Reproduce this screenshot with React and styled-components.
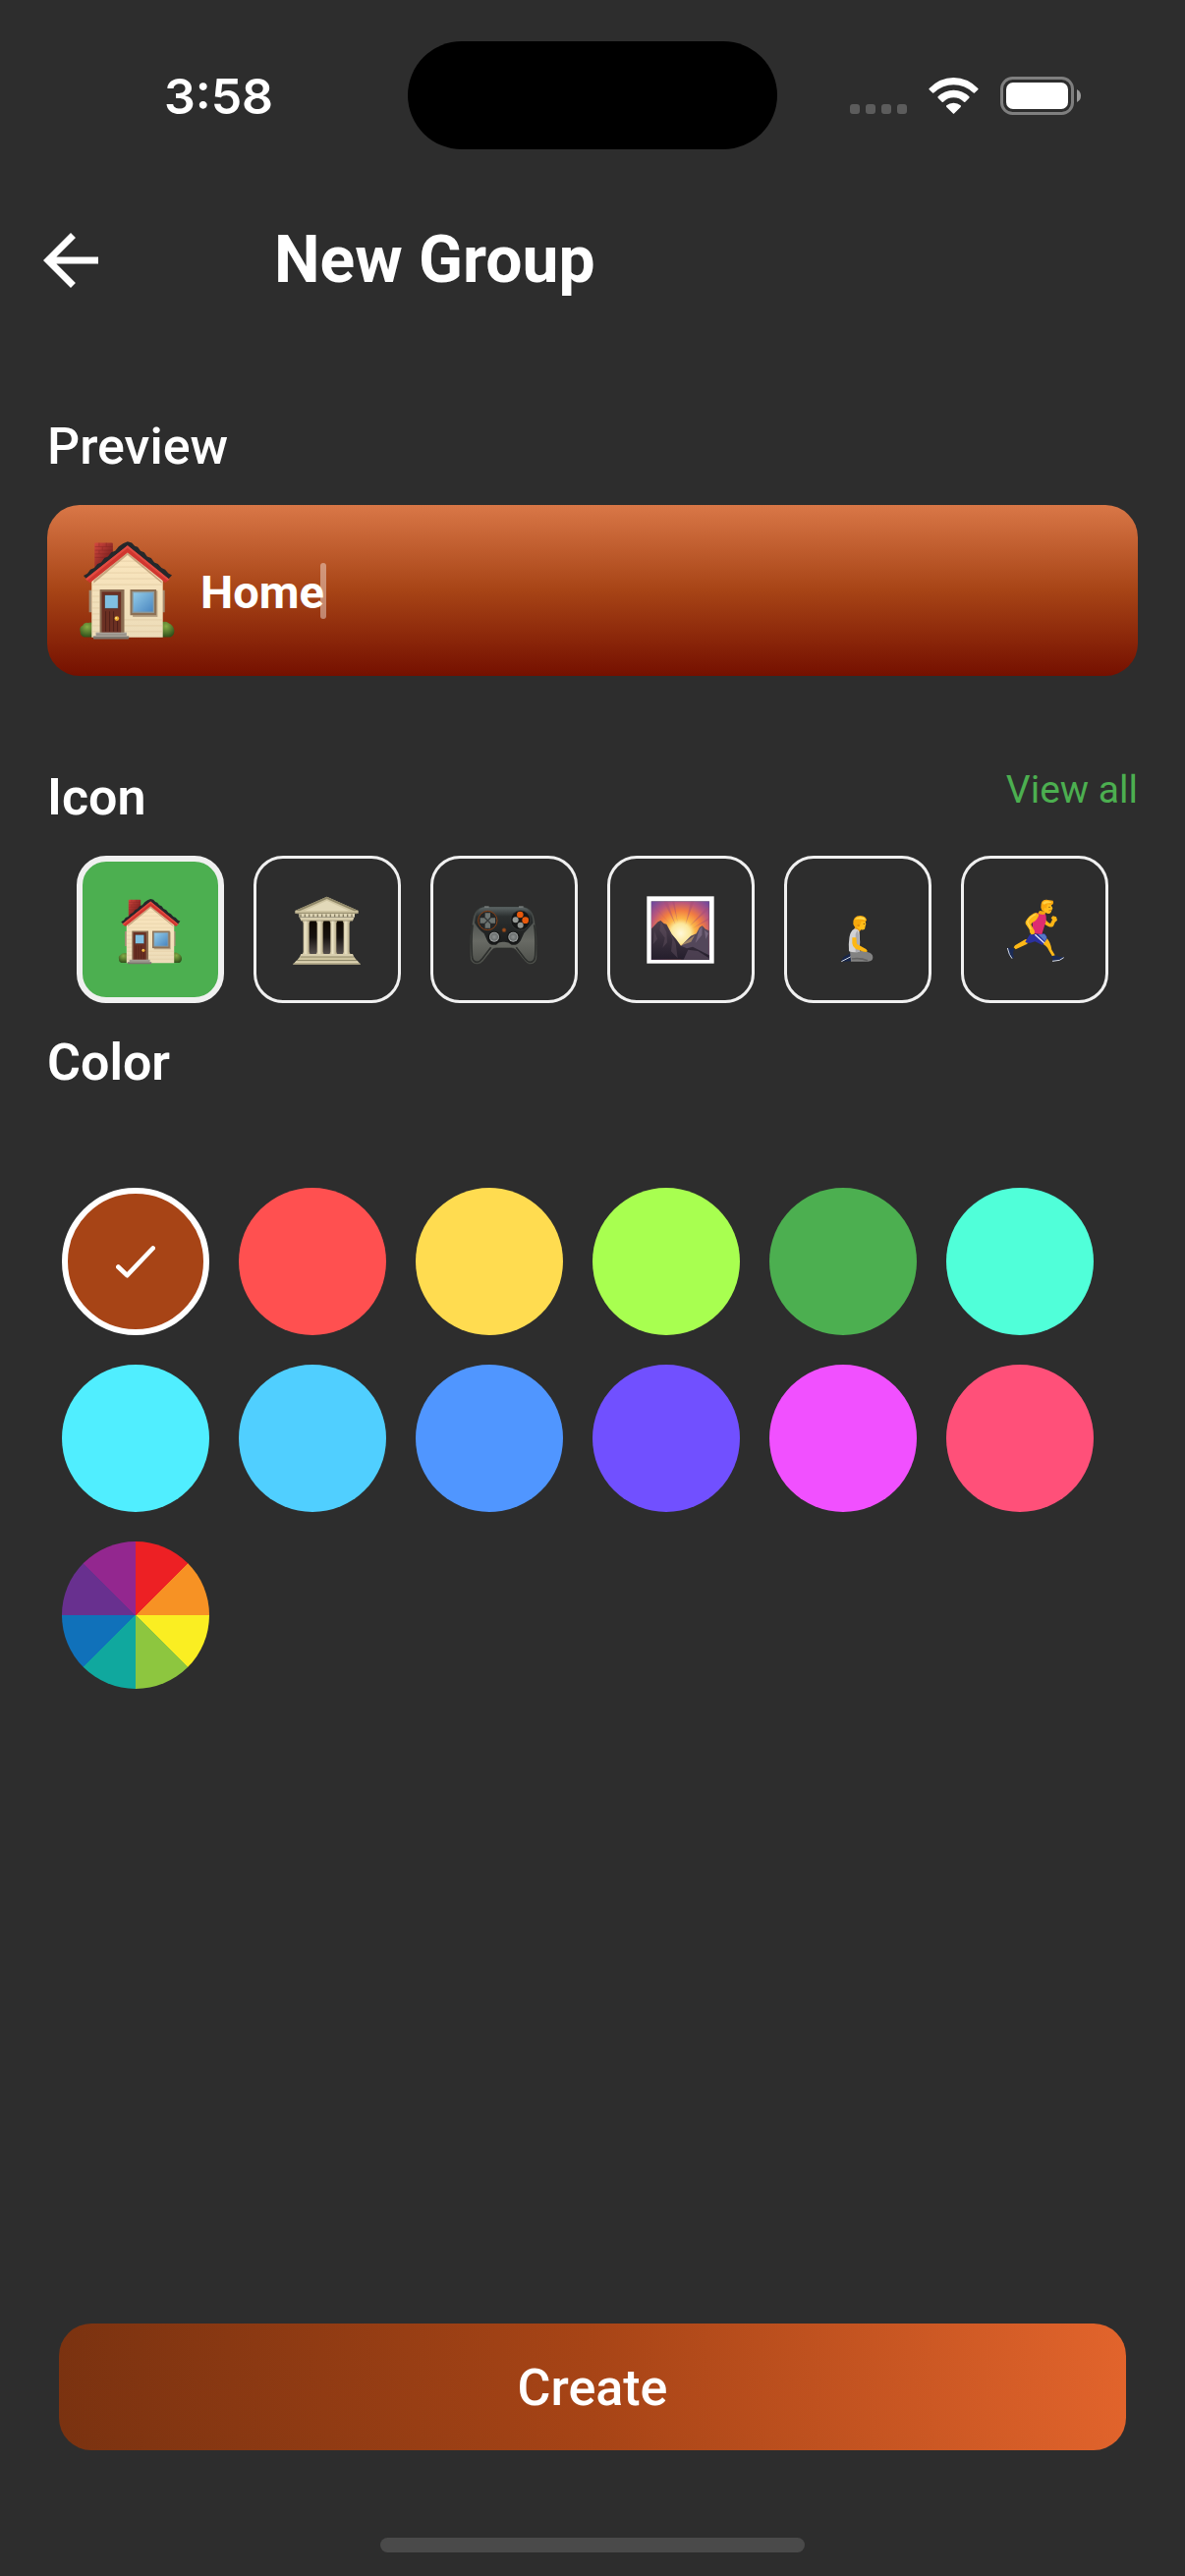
import React, { useState } from 'react';
import styled, { createGlobalStyle } from 'styled-components';

const GlobalStyle = createGlobalStyle`
    * {
        box-sizing: border-box;
    }

    body {
        margin: 0;
        background: #2d2d2d;
        font-family: Roboto, sans-serif;
        color: #fff;
    }

    button {
        margin: 0;
        padding: 0;
        border: none;
        background: none;
        color: inherit;
        font-family: inherit;
        cursor: pointer;
    }

    svg {
        display: block;
    }
`;

const Screen = styled.div`
    display: flex;
    flex-direction: column;
    min-height: 100vh;
    background: #2d2d2d;
`;

const StatusBar = styled.div`
    display: grid;
    grid-template-columns: 1fr 376px 1fr;
    align-items: center;
    padding: 42px 30px 0;
`;

const Time = styled.div`
    padding-top: 2px;
    font-family: Inter, sans-serif;
    font-size: 50px;
    font-weight: 600;
    line-height: 60px;
    text-align: center;
`;

const Island = styled.div`
    height: 110px;
    border-radius: 55px;
    background: #000;
`;

const StatusIcons = styled.div`
    display: flex;
    justify-content: center;
    align-items: center;
    gap: 22px;
    padding-right: 2px;
`;

const Header = styled.header`
    display: flex;
    align-items: center;
    gap: 165px;
    padding: 71px 30px 0;
`;

const BackButton = styled.button`
    width: 84px;
    height: 84px;
`;

const Title = styled.h1`
    margin: 0;
    font-size: 66px;
    font-weight: 700;
    line-height: 80px;
`;

const Main = styled.main`
    display: flex;
    flex-direction: column;
    padding: 118px 48px 60px;
`;

const SectionHead = styled.div`
    display: flex;
    justify-content: space-between;
    align-items: flex-start;
    margin-bottom: 29px;
`;

const Label = styled.h2`
    margin: 0;
    font-size: 52px;
    font-weight: ${({ $strong }) => ($strong ? 600 : 500)};
    line-height: 60px;
`;

const ViewAll = styled.a`
    font-size: 39px;
    line-height: 44px;
    color: #4caf50;
    text-decoration: none;
`;

const Preview = styled.label`
    display: flex;
    align-items: center;
    height: 174px;
    margin-bottom: 94px;
    padding: 0 33px;
    border-radius: 33px;
    background: linear-gradient(180deg, #d97747 0%, #a74416 50%, #751000 100%);

    svg {
        width: 97px;
        height: 100px;
        margin-right: 26px;
    }
`;

const NameInput = styled.input`
    field-sizing: content;
    min-width: 60px;
    height: 60px;
    padding: 2px 0 0;
    border: none;
    outline: none;
    background: none;
    color: #fff;
    caret-color: transparent;
    font-family: inherit;
    font-size: 47px;
    font-weight: 700;
    line-height: 58px;
`;

const Caret = styled.span`
    width: 6px;
    height: 57px;
    margin-left: -4px;
    border-radius: 3px;
    background: rgba(255, 255, 255, 0.4);
`;

const Tiles = styled.div`
    display: flex;
    flex-wrap: wrap;
    justify-content: center;
    gap: 30px;
    margin-bottom: 31px;
`;

const Tile = styled.button`
    display: flex;
    justify-content: center;
    align-items: center;
    width: 150px;
    height: 150px;
    border: ${({ $active }) => ($active ? '6px' : '3px')} solid #f0f0f0;
    border-radius: 30px;
    background: ${({ $active }) => ($active ? '#4caf50' : 'transparent')};

    svg {
        width: 72px;
        height: 72px;
    }
`;

const Colors = styled.div`
    display: flex;
    flex-wrap: wrap;
    gap: 30px;
    padding: 68px 15px 0;
`;

const Swatch = styled.button`
    display: flex;
    justify-content: center;
    align-items: center;
    width: 150px;
    height: 150px;
    border: ${({ $active }) => ($active ? '6px solid #fff' : 'none')};
    border-radius: 50%;
    background: ${({ $color }) => $color};
`;

const Footer = styled.footer`
    display: flex;
    flex-direction: column;
    align-items: center;
    margin-top: auto;
    padding: 0 60px 24px;
`;

const CreateButton = styled.button`
    width: 100%;
    height: 129px;
    margin-bottom: 89px;
    padding-top: 2px;
    border-radius: 33px;
    background: linear-gradient(84deg, #7a3210 0%, #a74416 50%, #e2642c 100%);
    font-size: 52px;
    font-weight: 500;
    line-height: 60px;
`;

const HomeIndicator = styled.div`
    width: 432px;
    height: 15px;
    border-radius: 8px;
    background: #4a4a4a;
`;

const Signal = () => (
    <svg width="58" height="39" viewBox="0 0 58 39" fill="#5c5c5c">
        <rect x="0" y="28" width="10" height="10" rx="3"/>
        <rect x="16" y="28" width="10" height="10" rx="3"/>
        <rect x="32" y="28" width="10" height="10" rx="3"/>
        <rect x="48" y="28" width="10" height="10" rx="3"/>
    </svg>
);

const Wifi = () => (
    <svg width="51" height="39" viewBox="0 0 153 117" fill="#fff">
        <path d="M2 36Q34 3 76.500 3T151 36Q153 38 151 40L140 50Q138 51 136 49Q110 25 76.500 25T17 49Q15 51 13 50L2 40Q0 38 2 36Z"/>
        <path d="M29 61Q49 41 76.500 41T124 61Q126 63 124 65L112 77Q110 79 108 77Q94 64 76.500 64T45 77Q43 79 41 77L29 65Q27 63 29 61Z"/>
        <path d="M55 88Q64 80 76.500 80T98 88Q100 90 98 93L79 112Q76.500 115 74 112L55 93Q53 90 55 88Z"/>
    </svg>
);

const Battery = () => (
    <svg width="83" height="39" viewBox="0 0 83 39">
        <rect x="1.500" y="1.500" width="72" height="36" rx="11" fill="none" stroke="#7f7f7f" strokeWidth="3"/>
        <rect x="6" y="6" width="63" height="27" rx="7" fill="#fff"/>
        <path d="M78 13Q82 15 82 19.500T78 26Z" fill="#9a9a9a"/>
    </svg>
);

const ArrowBack = () => (
    <svg width="84" height="84" viewBox="0 0 24 24" fill="#fff">
        <path d="M20 11H7.830l5.590-5.590L12 4l-8 8 8 8 1.410-1.410L7.830 13H20v-2z"/>
    </svg>
);

const Check = () => (
    <svg width="40" height="33" viewBox="0 0 120 98" fill="none" stroke="#fff" strokeWidth="14">
        <path d="M7 64L34 90L113 7" strokeLinecap="round" strokeLinejoin="round"/>
    </svg>
);

const House = ({ id, viewBox = '0 0 292 300' }) => (
    <svg viewBox={viewBox}>
        <defs>
            <linearGradient id={`${id}-glass`} x1="0" y1="0" x2="1" y2="1">
                <stop offset="0" stopColor="#92cbe8"/>
                <stop offset="1" stopColor="#4a86c0"/>
            </linearGradient>
            <linearGradient id={`${id}-brick`} x1="0" y1="0" x2="1" y2="1">
                <stop offset="0" stopColor="#d4473f"/>
                <stop offset="1" stopColor="#5e1414"/>
            </linearGradient>
            <linearGradient id={`${id}-wall`} x1="0" y1="0" x2="0" y2="1">
                <stop offset="0" stopColor="#fbe6bd"/>
                <stop offset="1" stopColor="#ecdcb9"/>
            </linearGradient>
            <radialGradient id={`${id}-bush`} cx="0.450" cy="0.300" r="0.700">
                <stop offset="0" stopColor="#86ad46"/>
                <stop offset="1" stopColor="#31511b"/>
            </radialGradient>
        </defs>
        <path d="M2 276Q-2 262 10 257Q14 247 27 249Q40 244 50 262V293H14Q2 290 2 276Z" fill={`url(#${id}-bush)`}/>
        <path d="M245 250Q262 241 273 250Q288 257 290 272Q291 287 279 293H245Z" fill={`url(#${id}-bush)`}/>
        <path d="M29 149h9v68h-9zM254 149h7v68h-7z" fill="#a18c72"/>
        <rect x="46" y="4" width="56" height="80" rx="3" fill={`url(#${id}-brick)`}/>
        <path d="M47 16H101M47 27H101M47 38H95M47 49H82M60 4V16M82 4V16M70 16V27M60 27V38" stroke="#7a2020" strokeWidth="2" opacity="0.500"/>
        <path d="M37 294V115L147 26L255 115V294Z" fill={`url(#${id}-wall)`}/>
        <path d="M118 60H178M98 78H198M76 96H220M54 114H240M37 132H255M37 150H61M37 168H61M37 186H61M37 204H61M37 222H61M37 240H255M37 258H255M37 276H255" stroke="#d9c095" strokeWidth="2" opacity="0.700"/>
        <path d="M43 128L147 42L252 128L252 122L147 33L43 120Z" fill="#a8805c" opacity="0.600"/>
        <path d="M147 0L160 4L169 14L178 17L187 29L198 33L207 46L219 51L229 64L240 69L251 81L262 86L272 97L283 103L271 116L147 18L23 116L12 105L24 98L33 86L45 81L55 69L66 64L76 51L87 46L97 33L109 29L120 15L133 6Z" fill="#25282b"/>
        <path d="M147 12L275 116L263 127L147 34L32 127L18 115Z" fill="#d0362f"/>
        <path d="M147 12L275 116L270 120L147 20L23 120L18 115Z" fill="#e14b41"/>
        <rect x="62" y="147" width="75" height="135" fill="#896b51"/>
        <rect x="68" y="154" width="59" height="126" fill="#6b3023"/>
        <path d="M80 214v62M92 214v62M104 214v62M116 244v32" stroke="#4f211a" strokeWidth="3"/>
        <rect x="77" y="164" width="41" height="41" fill="#80c0e1" stroke="#55372b" strokeWidth="2"/>
        <circle cx="114" cy="236" r="7" fill="#e7a82e"/>
        <circle cx="112" cy="234" r="3" fill="#ffe38a"/>
        <path d="M159 151h80v80h-76z" fill="#947c60" opacity="0.600"/>
        <rect x="155" y="147" width="80" height="79" fill="#8c7155"/>
        <rect x="161" y="153" width="68" height="66" fill="#8d9a9c"/>
        <rect x="165" y="157" width="60" height="58" fill={`url(#${id}-glass)`}/>
        <rect x="50" y="279" width="94" height="11" fill="#9a948b"/>
        <rect x="42" y="289" width="109" height="10" rx="2" fill="#7d776f"/>
        <path d="M50 280H144M43 290H150" stroke="#b9b3aa" strokeWidth="2"/>
    </svg>
);

// the tile artwork is a bit smaller than its box
const HouseTile = () => <House id="tile" viewBox="-16 -22 324 324"/>;

const Museum = () => (
    <svg viewBox="0 0 216 216">
        <defs>
            <linearGradient id="hall" x1="0" y1="0" x2="0" y2="1">
                <stop offset="0" stopColor="#0f0800"/>
                <stop offset="0.500" stopColor="#171310"/>
                <stop offset="1" stopColor="#57504e"/>
            </linearGradient>
            <linearGradient id="column" x1="0" y1="0" x2="1" y2="0">
                <stop offset="0" stopColor="#bdb08b"/>
                <stop offset="0.400" stopColor="#ece4c6"/>
                <stop offset="1" stopColor="#a99c78"/>
            </linearGradient>
        </defs>
        <rect x="40" y="80" width="130" height="104" fill="url(#hall)"/>
        <path d="M107 8L203 51V59H10V51Z" fill="#cfc5a2"/>
        <path d="M107 8L203 51L190 52L107 15L24 52L10 51Z" fill="#8f8768"/>
        <path d="M107 20L174 51H40Z" fill="#e2d9b9"/>
        <path d="M10 56H203L198 61H16Z" fill="#9d9474"/>
        <rect x="22" y="60" width="170" height="11" fill="#ddd4b4"/>
        <path d="M25 66H190" stroke="#857c60" strokeWidth="9" strokeDasharray="4 9"/>
        <path d="M24 72H190L186 82H28Z" fill="#d8ceae"/>
        <path d="M28 81H186" stroke="#958b6b" strokeWidth="2"/>
        {[44, 86, 127, 167].map((x) => (
            <g key={x} fill="url(#column)">
                <path d={`M${x - 12} 82H${x + 12}L${x + 9} 89V177L${x + 12} 184H${x - 12}L${x - 9} 177V89Z`}/>
            </g>
        ))}
        <path d="M28 183H186L190 192H24Z" fill="#d9cfaf"/>
        <path d="M24 192H190L199 203H15Z" fill="#cec49f"/>
        <path d="M14 203H200L210 215H3Z" fill="#dcd2b1"/>
        <path d="M26 192H189M16 203H198M4 213H209" stroke="#8d8566" strokeWidth="3"/>
    </svg>
);

const Gamepad = () => (
    <svg viewBox="0 0 216 216">
        <defs>
            <linearGradient id="grip" x1="0" y1="0" x2="0" y2="1">
                <stop offset="0" stopColor="#3c4140"/>
                <stop offset="0.600" stopColor="#686a64"/>
                <stop offset="1" stopColor="#4d4f4a"/>
            </linearGradient>
            <linearGradient id="shell" x1="0" y1="0" x2="0" y2="1">
                <stop offset="0" stopColor="#5d6666"/>
                <stop offset="0.250" stopColor="#2b2f2f"/>
                <stop offset="1" stopColor="#1b1c1c"/>
            </linearGradient>
            <radialGradient id="stick">
                <stop offset="0" stopColor="#8e9292"/>
                <stop offset="0.700" stopColor="#6c7070"/>
                <stop offset="1" stopColor="#b0b3b2"/>
            </radialGradient>
        </defs>
        <path d="M34 41Q45 35 60 38H153Q168 35 180 42Q199 52 202 82Q209 120 209 190Q208 215 188 215Q178 214 170 204L143 170Q138 165 130 165H84Q77 165 72 170L44 206Q36 215 25 215Q4 214 4 190Q3 125 11 84Q14 51 34 41Z" fill="url(#grip)" stroke="#282a29" strokeWidth="2"/>
        <path d="M12 94Q7 130 10 187Q11 208 26 208Q34 207 41 198L68 163M200 94Q206 130 203 187Q202 208 187 208Q179 207 172 198L145 163" fill="none" stroke="#2d2f2d" strokeWidth="5"/>
        <path d="M35 44Q45 39 62 40H150Q168 38 179 45Q195 57 197 88Q183 105 169 119L158 143Q148 158 131 155Q121 145 107 146Q93 145 84 155Q64 158 57 143L47 121Q30 109 18 88Q20 55 35 44Z" fill="url(#shell)"/>
        <path d="M48 39H62M153 39H167" stroke="#919695" strokeWidth="3"/>
        <circle cx="58" cy="81" r="29" fill="#242626" stroke="#874016" strokeWidth="3"/>
        <path d="M50 58H66V73H81V89H66V104H50V89H35V73H50Z" fill="#6c7370"/>
        <path d="M49 72L67 90M67 72L49 90" stroke="#353939" strokeWidth="4"/>
        <circle cx="158" cy="80" r="30" fill="#151616" stroke="#3d403f" strokeWidth="2"/>
        <circle cx="157" cy="63" r="10" fill="#e8590c"/>
        <circle cx="173" cy="80" r="10" fill="#e8590c"/>
        <circle cx="143" cy="79" r="9" fill="#959996"/>
        <circle cx="158" cy="95" r="9" fill="#909491"/>
        <circle cx="108" cy="110" r="6" fill="#9c4d1d" stroke="#5f3519" strokeWidth="2"/>
        <circle cx="78" cy="132" r="19" fill="#131414"/>
        <circle cx="136" cy="132" r="19" fill="#131414"/>
        <circle cx="78" cy="131" r="15" fill="url(#stick)"/>
        <circle cx="136" cy="131" r="15" fill="url(#stick)"/>
    </svg>
);

const Picture = () => (
    <svg viewBox="0 0 216 216">
        <defs>
            <radialGradient id="sky" gradientUnits="userSpaceOnUse" cx="107" cy="120" r="125">
                <stop offset="0" stopColor="#fff8d8"/>
                <stop offset="0.240" stopColor="#fbe79a"/>
                <stop offset="0.360" stopColor="#fcb648"/>
                <stop offset="0.560" stopColor="#f17b42"/>
                <stop offset="0.760" stopColor="#b9567c"/>
                <stop offset="1" stopColor="#744a9b"/>
            </radialGradient>
            <linearGradient id="peak" x1="0" y1="0" x2="0" y2="1">
                <stop offset="0" stopColor="#4d3f4d"/>
                <stop offset="1" stopColor="#241e2c"/>
            </linearGradient>
        </defs>
        <rect x="4" y="7" width="205" height="205" fill="#fff"/>
        <rect x="17" y="22" width="178" height="179" fill="#5a4a66"/>
        <rect x="18" y="23" width="176" height="177" fill="url(#sky)"/>
        <path d="M56 23L91 93L67 23ZM37 50L80 97L26 36ZM122 93L138 23H148ZM134 98L188 40L194 46ZM142 106L194 72V78ZM82 23L98 86L88 23Z" fill="#a54b76" opacity="0.450"/>
        <path d="M108 158L138 128L155 121L165 102L173 97L183 107L194 112V200H108Z" fill="#53475a"/>
        <path d="M164 107L173 98L172 125L152 150ZM180 110L192 120L184 138Z" fill="#82718a" opacity="0.700"/>
        <path d="M105 158L150 126L139 146Z" fill="#e4ba72" opacity="0.500"/>
        <path d="M18 106L38 85L46 81L56 90L64 92L80 122L94 139L108 158L126 166L144 161L194 187V200H18Z" fill="url(#peak)"/>
        <path d="M47 83L43 111L59 134L52 164L66 148L64 116ZM66 98L82 138L78 175L98 196L92 150ZM27 112L23 154L36 137Z" fill="#695766" opacity="0.400"/>
        <path d="M116 200L130 170L160 174L194 196V200Z" fill="#5a4c5e" opacity="0.700"/>
    </svg>
);

const Kneeling = () => (
    <svg viewBox="0 0 216 216">
        <path d="M57 203L66 191L88 180V205L64 206Z" fill="#17264b"/>
        <path d="M58 206L87 191" stroke="#d3d8df" strokeWidth="3"/>
        <path d="M84 173Q110 169 137 177Q154 181 154 193Q154 206 139 206H87Z" fill="#828282"/>
        <path d="M90 198Q116 194 138 203" fill="none" stroke="#636363" strokeWidth="5"/>
        <path d="M99 98H117V110L111 117H97Z" fill="#e99b12"/>
        <path d="M98 106Q112 108 113 118Q116 148 113 176Q96 180 81 175Q78 124 91 111Z" fill="#d2d2d4"/>
        <path d="M106 111Q115 124 113 176L101 177V122Z" fill="#aaaab0"/>
        <path d="M91 133H103L105 152L133 168Q139 173 136 177L126 176L101 167Q92 161 91 151Z" fill="#fdb714"/>
        <path d="M99 77H130L133 92L131 98L129 107Q124 111 113 108L100 99Z" fill="#ffbd18"/>
        <path d="M94 92Q92 66 116 66Q134 67 135 81Q131 86 119 83L115 95L109 92L105 103Q96 101 94 92Z" fill="#f6a80c"/>
        <path d="M98 77Q108 67 126 71Q132 75 132 80Q117 75 98 77Z" fill="#ffd94b"/>
        <circle cx="110" cy="96" r="4" fill="#e58e0a"/>
        <circle cx="127" cy="91" r="2" fill="#5b3818"/>
    </svg>
);

const Runner = () => (
    <svg viewBox="0 0 216 216">
        <path d="M139 75Q149 89 156 90L162 78L158 73L164 67L174 70L177 80L170 86L165 98Q159 103 150 99L133 89Z" fill="#fdb515"/>
        <path d="M94 142L84 153L50 169L44 163L48 157L80 138Z" fill="#fdb817"/>
        <path d="M127 138L146 136Q157 149 160 170L171 188L163 192L151 172Q148 160 126 148Z" fill="#fdb817"/>
        <path d="M26 164L38 165L46 167L42 179L45 195L38 196L28 183Z" fill="#1b2b55"/>
        <path d="M25 165L31 184L39 197" fill="none" stroke="#d7dce5" strokeWidth="3"/>
        <path d="M160 190L171 187L182 191L197 193L190 200L164 205Z" fill="#1b2b55"/>
        <path d="M162 205L184 202L197 194" fill="none" stroke="#d7dce5" strokeWidth="3"/>
        <path d="M94 122L138 121Q147 128 145 138L132 156L109 145L95 149Q86 151 79 146Z" fill="#2b319e"/>
        <path d="M118 122H138L145 132L140 145Z" fill="#5678c5"/>
        <path d="M109 124L137 149" stroke="#e9ecf5" strokeWidth="4"/>
        <path d="M123 51L142 53L139 65L128 68L116 62Z" fill="#f3a412"/>
        <path d="M112 56Q130 66 141 61Q147 78 138 97L130 123L103 120L101 84Z" fill="#de2d70"/>
        <path d="M112 57L121 63Q118 78 101 87L97 93L108 113L107 122L98 124Q91 116 92 109L80 91Q78 84 86 75Q97 61 112 57Z" fill="#fdb817"/>
        <path d="M111 62Q91 71 86 86L97 108" fill="none" stroke="#ffd451" strokeWidth="4"/>
        <path d="M132 24L158 24L159 36L163 43L157 57Q152 62 143 58L129 47Z" fill="#ffbe1c"/>
        <path d="M127 41Q126 16 144 17L164 20Q168 31 158 34L147 31L144 44L138 41L135 53Q128 50 127 41Z" fill="#f9a80f"/>
        <path d="M132 27Q138 18 157 23L160 27Q144 26 136 32Z" fill="#ffd044"/>
        <circle cx="153" cy="40" r="2" fill="#67401a"/>
        <path d="M151 51L159 49" stroke="#bb6610" strokeWidth="2"/>
    </svg>
);

const icons = [
    { name: 'Home', Art: HouseTile },
    { name: 'Museum', Art: Museum },
    { name: 'Games', Art: Gamepad },
    { name: 'Picture', Art: Picture },
    { name: 'Kneeling', Art: Kneeling },
    { name: 'Running', Art: Runner },
];

const colors = [
    '#a74416', '#ff5050', '#ffdc50', '#a8ff50', '#4caf50', '#50ffd9',
    '#50eeff', '#50cfff', '#5096ff', '#7150ff', '#f150ff', '#ff5079',
];

const wheel = `conic-gradient(
    #ed2024 0 45deg, #f79224 45deg 90deg, #faee22 90deg 135deg, #8dc63f 135deg 180deg,
    #10a89e 180deg 225deg, #1071ba 225deg 270deg, #68308f 270deg 315deg, #93278f 315deg
)`;

export default (() => {
    const [name, setName] = useState('Home');
    const [icon, setIcon] = useState('Home');
    const [color, setColor] = useState(colors[0]);

    return (
        <Screen>
            <GlobalStyle/>
            <StatusBar>
                <Time>3:58</Time>
                <Island/>
                <StatusIcons>
                    <Signal/>
                    <Wifi/>
                    <Battery/>
                </StatusIcons>
            </StatusBar>
            <Header>
                <BackButton aria-label="Back"><ArrowBack/></BackButton>
                <Title>New Group</Title>
            </Header>
            <Main>
                <SectionHead><Label>Preview</Label></SectionHead>
                <Preview>
                    <House id="preview"/>
                    <NameInput
                        aria-label="Group name"
                        value={name}
                        onChange={(e) => setName(e.target.value)}
                    />
                    <Caret/>
                </Preview>
                <SectionHead>
                    <Label $strong>Icon</Label>
                    <ViewAll href="#">View all</ViewAll>
                </SectionHead>
                <Tiles>
                    {icons.map(({ name, Art }) => (
                        <Tile
                            key={name}
                            aria-label={name}
                            aria-pressed={icon === name}
                            $active={icon === name}
                            onClick={() => setIcon(name)}
                        >
                            <Art/>
                        </Tile>
                    ))}
                </Tiles>
                <SectionHead><Label $strong>Color</Label></SectionHead>
                <Colors>
                    {colors.map((c) => (
                        <Swatch
                            key={c}
                            aria-label={c}
                            aria-pressed={color === c}
                            $active={color === c}
                            $color={c}
                            onClick={() => setColor(c)}
                        >
                            {color === c && <Check/>}
                        </Swatch>
                    ))}
                    <Swatch aria-label="Custom color" $color={wheel}/>
                </Colors>
            </Main>
            <Footer>
                <CreateButton>Create</CreateButton>
                <HomeIndicator/>
            </Footer>
        </Screen>
    )
})
